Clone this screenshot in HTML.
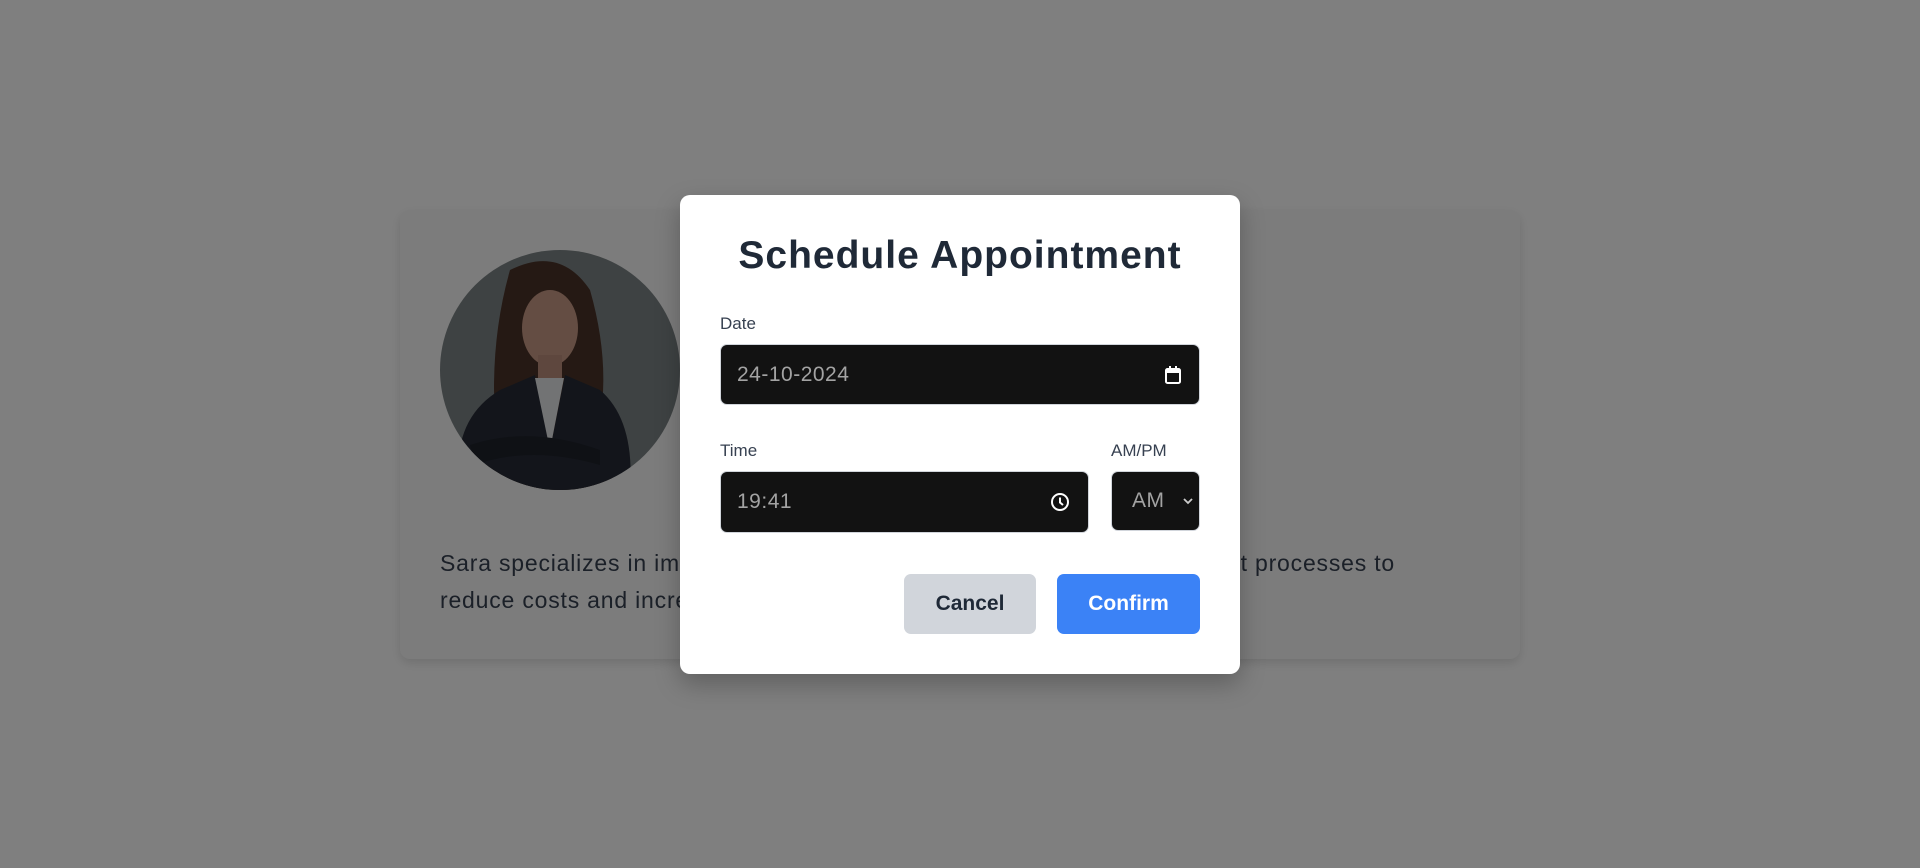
<!DOCTYPE html>
<html><head><style>
*{box-sizing:border-box;margin:0;padding:0}
body{width:1920px;height:868px;position:relative;overflow:hidden;background:#fff;font-family:"Liberation Sans",sans-serif}
.card{position:absolute;left:400px;top:210px;width:1120px;height:449px;background:#f9f9f9;border-radius:10px;box-shadow:0 4px 10px rgba(0,0,0,.12)}
.av{position:absolute;left:440px;top:250px;width:240px;height:240px;border-radius:50%;overflow:hidden}
.p{position:absolute;font-size:23px;color:#374151;line-height:37px;letter-spacing:.8px;white-space:nowrap}
.ov{position:absolute;inset:0;background:rgba(0,0,0,.5)}
.modal{position:absolute;left:680px;top:195px;width:560px;height:479px;background:#fff;border-radius:10px;box-shadow:0 10px 25px rgba(0,0,0,.25)}
h1{position:absolute;left:680px;width:560px;top:234px;text-align:center;font-size:39px;font-weight:bold;color:#1f2937;letter-spacing:1px}
.lbl{position:absolute;font-size:17px;color:#374151}
.in{position:absolute;background:#121212;border-radius:7px;border:1px solid #d1d5db;color:#a3a3a3;font-size:21px;display:flex;align-items:center;padding-left:16px;letter-spacing:.5px}
.btn{position:absolute;top:574px;height:60px;border-radius:7px;font-size:21px;font-weight:bold;display:flex;align-items:center;justify-content:center}
</style></head><body>
<div class="card"></div>
<div class="av">
<svg width="240" height="240" viewBox="0 0 240 240">
<rect width="240" height="240" fill="#7d8486"/>
<path d="M70 20 Q120 -5 150 40 Q170 110 160 170 L175 240 L40 240 L55 170 Q50 90 70 20Z" fill="#4a3328"/>
<ellipse cx="110" cy="78" rx="28" ry="38" fill="#c99a86"/>
<rect x="98" y="105" width="24" height="30" fill="#bd8f7c"/>
<path d="M20 240 Q10 170 60 140 L95 125 L110 200 L125 125 L160 140 Q195 170 190 240Z" fill="#262b36"/>
<path d="M95 128 L110 200 L124 128Z" fill="#e4e6e8"/>
<path d="M30 195 Q90 175 160 200 L160 215 Q90 195 35 215Z" fill="#1e222b"/>
</svg></div>
<div class="p" style="left:440px;top:545px">Sara specializes in improving</div>
<div class="p" style="left:440px;top:582px">reduce costs and increase</div>
<div class="p" style="right:525px;top:545px">management processes to</div>
<div class="ov"></div>
<div class="modal"></div>
<h1>Schedule Appointment</h1>
<div class="lbl" style="left:720px;top:314px">Date</div>
<div class="in" style="left:720px;top:344px;width:480px;height:61px">24-10-2024
<svg style="position:absolute;left:443px;top:20px" width="18" height="20" viewBox="0 0 18 20"><rect x="2" y="4" width="14" height="14" rx="1.5" fill="none" stroke="#fff" stroke-width="2"/><rect x="2" y="4" width="14" height="4" fill="#fff"/><rect x="5" y="1" width="2" height="4" fill="#fff"/><rect x="11" y="1" width="2" height="4" fill="#fff"/></svg></div>
<div class="lbl" style="left:720px;top:441px">Time</div>
<div class="lbl" style="left:1111px;top:441px">AM/PM</div>
<div class="in" style="left:720px;top:471px;width:369px;height:62px">19:41
<svg style="position:absolute;left:329px;top:20px" width="20" height="20" viewBox="0 0 20 20"><circle cx="10" cy="10" r="8" fill="none" stroke="#fff" stroke-width="2"/><path d="M10 5.5V10.5L13 13" fill="none" stroke="#fff" stroke-width="2"/></svg></div>
<div class="in" style="left:1111px;top:471px;width:89px;height:60px;padding-left:20px">AM
<svg style="position:absolute;left:70px;top:25px" width="12" height="8" viewBox="0 0 12 8"><path d="M2 2L6 6L10 2" fill="none" stroke="#ccc" stroke-width="1.8"/></svg></div>
<div class="btn" style="left:904px;width:132px;background:#d1d5db;color:#1f2937">Cancel</div>
<div class="btn" style="left:1057px;width:143px;background:#3b82f6;color:#fff">Confirm</div>
</body></html>
